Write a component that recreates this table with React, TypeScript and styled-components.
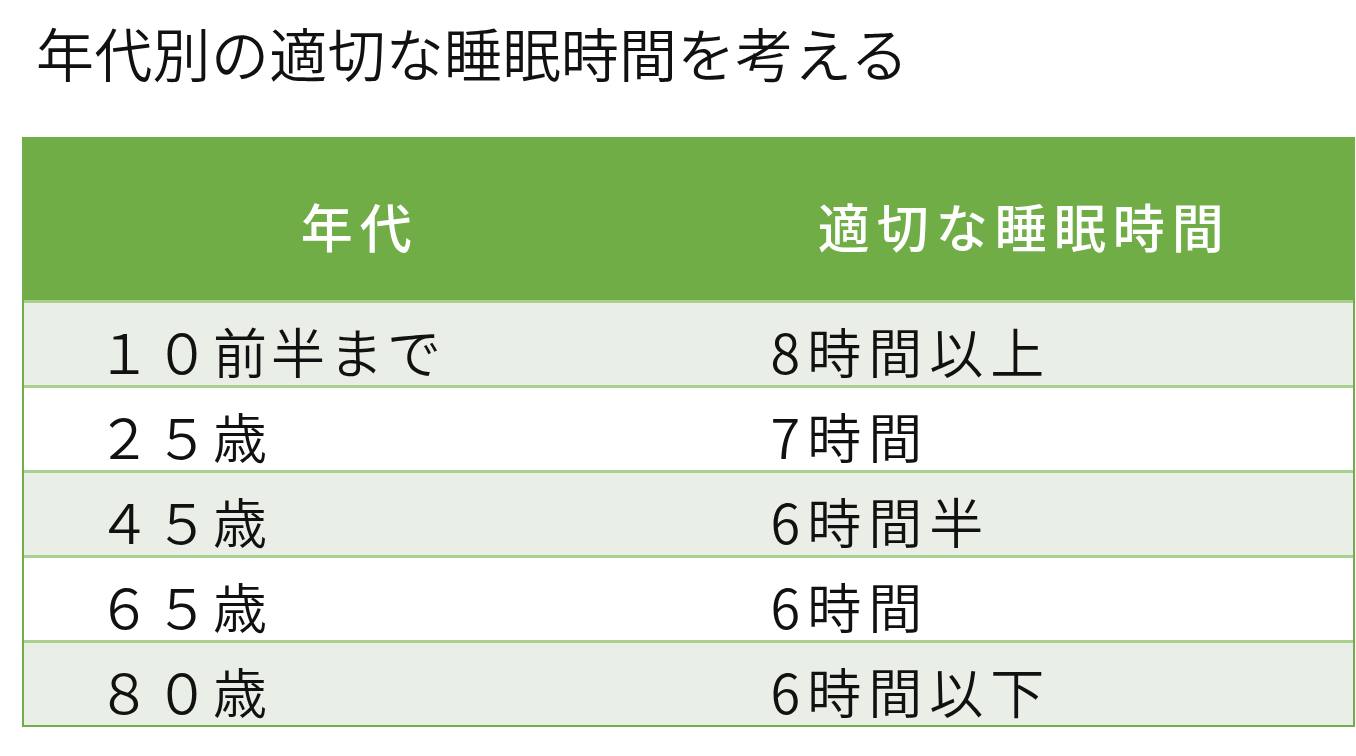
import styled, { createGlobalStyle } from "styled-components";

const GlobalStyle = createGlobalStyle`
    html, body {
        margin: 0;
        padding: 0;
        background: #ffffff;
    }
    body {
        font-family: "Noto Sans CJK JP", "Noto Sans", sans-serif;
        color: #111;
    }
`

const rows: [string, string][] = [
    ['１０前半まで', '8時間以上'],
    ['２５歳', '7時間'],
    ['４５歳', '6時間半'],
    ['６５歳', '6時間'],
    ['８０歳', '6時間以下'],
];

const App: React.FC = () => {
    return (
        <>
            <GlobalStyle />
            <Page>
                <Title>年代別の適切な睡眠時間を考える</Title>
                <Table>
                    <HeaderRow>
                        <HeadCell>年代</HeadCell>
                        <HeadCell>適切な睡眠時間</HeadCell>
                    </HeaderRow>
                    {rows.map(([age, hours], i) => (
                        <Row key={age} $shaded={i % 2 === 0}>
                            <Cell $indent={73} $spacing={4}>{age}</Cell>
                            <Cell $indent={82} $spacing={7}>{hours}</Cell>
                        </Row>
                    ))}
                </Table>
            </Page>
        </>
    )
}
export default App;

const Page = styled.div`
    width: 1356px;
    height: 756px;
    box-sizing: border-box;
    padding: 22px 1px 0 22px;
    overflow: hidden;
`
const Title = styled.h1`
    margin: 0 0 0 14px;
    font-size: 58px;
    line-height: 60px;
    font-weight: 350;
    color: #111;
    letter-spacing: 0.3px;
`
const Table = styled.div`
    margin-top: 55px;
    border: 2px solid #72ad4a;
    display: flex;
    flex-direction: column;
`
const HeaderRow = styled.div`
    display: grid;
    grid-template-columns: 1fr 1fr;
    height: 161px;
    background: #70ad47;
`
const HeadCell = styled.div`
    display: flex;
    align-items: center;
    justify-content: center;
    padding: 12px 0 0 7px;
    color: #ffffff;
    font-size: 52px;
    font-weight: 500;
    letter-spacing: 7px;
`
const Row = styled.div<{ $shaded: boolean }>`
    display: grid;
    grid-template-columns: 1fr 1fr;
    height: 85px;
    box-sizing: border-box;
    border-top: 3px solid #a9d08e;
    background: ${(p) => (p.$shaded ? '#e9eee6' : '#ffffff')};
`
const Cell = styled.div<{ $indent: number; $spacing: number }>`
    display: flex;
    align-items: center;
    padding: 8px 0 0 ${(p) => p.$indent}px;
    font-size: 54px;
    font-weight: 350;
    letter-spacing: ${(p) => p.$spacing}px;
    color: #111;
`
